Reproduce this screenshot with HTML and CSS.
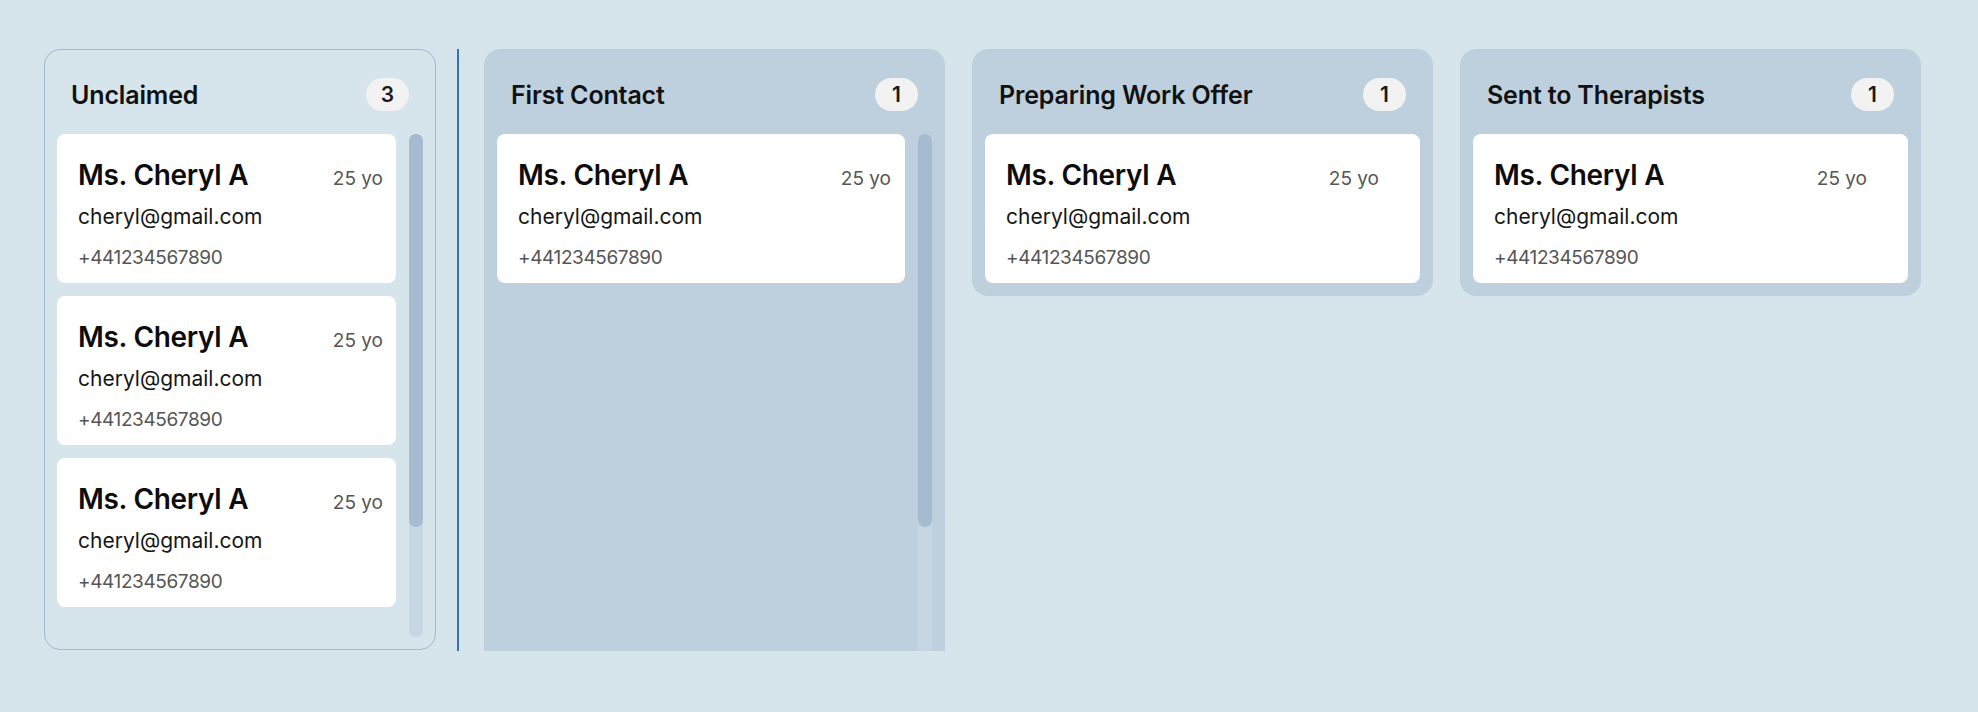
FILE: index.html
```html
<!DOCTYPE html>
<html lang="en">
<head>
<meta charset="utf-8">
<title>Board</title>
<link rel="stylesheet" href="styles.css">
</head>
<body>
<div class="board">
  <section class="column column--outlined">
    <header class="column-header">
      <h2 class="column-title">Unclaimed</h2>
      <span class="count">3</span>
    </header>
    <div class="column-body">
      <div class="card-list">
        <article class="card">
          <div class="card-top"><span class="name">Ms. Cheryl A</span><span class="age">25 yo</span></div>
          <div class="email">cheryl@gmail.com</div>
          <div class="phone">+441234567890</div>
        </article>
        <article class="card">
          <div class="card-top"><span class="name">Ms. Cheryl A</span><span class="age">25 yo</span></div>
          <div class="email">cheryl@gmail.com</div>
          <div class="phone">+441234567890</div>
        </article>
        <article class="card">
          <div class="card-top"><span class="name">Ms. Cheryl A</span><span class="age">25 yo</span></div>
          <div class="email">cheryl@gmail.com</div>
          <div class="phone">+441234567890</div>
        </article>
      </div>
      <div class="scroll-track"><div class="scroll-thumb"></div></div>
    </div>
  </section>

  <div class="divider"></div>

  <section class="column column--tall">
    <header class="column-header">
      <h2 class="column-title">First Contact</h2>
      <span class="count">1</span>
    </header>
    <div class="column-body">
      <div class="card-list">
        <article class="card">
          <div class="card-top"><span class="name">Ms. Cheryl A</span><span class="age">25 yo</span></div>
          <div class="email">cheryl@gmail.com</div>
          <div class="phone">+441234567890</div>
        </article>
      </div>
      <div class="scroll-track"><div class="scroll-thumb"></div></div>
    </div>
  </section>

  <section class="column">
    <header class="column-header">
      <h2 class="column-title">Preparing Work Offer</h2>
      <span class="count">1</span>
    </header>
    <div class="column-body">
      <div class="card-list">
        <article class="card">
          <div class="card-top"><span class="name">Ms. Cheryl A</span><span class="age">25 yo</span></div>
          <div class="email">cheryl@gmail.com</div>
          <div class="phone">+441234567890</div>
        </article>
      </div>
    </div>
  </section>

  <section class="column">
    <header class="column-header">
      <h2 class="column-title">Sent to Therapists</h2>
      <span class="count">1</span>
    </header>
    <div class="column-body">
      <div class="card-list">
        <article class="card">
          <div class="card-top"><span class="name">Ms. Cheryl A</span><span class="age">25 yo</span></div>
          <div class="email">cheryl@gmail.com</div>
          <div class="phone">+441234567890</div>
        </article>
      </div>
    </div>
  </section>
</div>
</body>
</html>
```

FILE: styles.css
```css
* { box-sizing: border-box; }

html, body {
  margin: 0;
  padding: 0;
}

body {
  background: #d6e4eb;
  font-family: Inter, Lato, "Liberation Sans", sans-serif;
  color: #111;
  width: 1978px;
  height: 712px;
  overflow: hidden;
}

.board {
  display: flex;
  align-items: flex-start;
  padding: 49px 0 0 44px;
  height: 651px;
  overflow: hidden;
}

.column {
  width: 461px;
  flex: none;
  background: #bed0dd;
  border-radius: 16px;
  padding: 13px;
  display: flex;
  flex-direction: column;
  margin-left: 27px;
}

.column--outlined {
  width: 392px;
  height: 601px;
  background: transparent;
  border: 1px solid #a3bad0;
  padding: 12px;
  margin-left: 0;
}

.column--tall {
  height: 640px;
  margin-left: 25px;
  border-radius: 16px 16px 0 0;
}

.divider {
  flex: none;
  width: 2px;
  height: 602px;
  margin-left: 21px;
  background: #3b6db5;
}

.column-header {
  display: flex;
  align-items: center;
  justify-content: space-between;
  height: 33px;
  margin: 16px 14px 23px;
}

.column-title {
  margin: 0;
  padding-top: 2px;
  font-size: 25px;
  font-weight: 600;
  line-height: 31px;
  letter-spacing: -0.15px;
  color: #111;
}

.count {
  min-width: 43px;
  height: 33px;
  padding: 0 10px;
  border-radius: 17px;
  background: #f2f2f2;
  font-size: 21px;
  font-weight: 600;
  line-height: 33px;
  text-align: center;
  color: #1a1a1a;
}

.column-body {
  flex: 1;
  display: flex;
  gap: 13px;
  min-height: 0;
}

.card-list {
  flex: 1;
  display: flex;
  flex-direction: column;
  gap: 13px;
  overflow: hidden;
}

.scroll-track {
  flex: none;
  width: 14px;
  border-radius: 7px;
  background: #c6d7e3;
}

.scroll-thumb {
  height: 393px;
  border-radius: 7px;
  background: #a6bbcf;
}

.card {
  flex: none;
  height: 149px;
  background: #fff;
  border-radius: 8px;
  padding: 23px 13px 14px 21px;
  display: flex;
  flex-direction: column;
}

.card-top {
  display: flex;
  align-items: baseline;
  justify-content: space-between;
  max-width: 373px;
  line-height: 36px;
}

.name {
  font-size: 28px;
  font-weight: 600;
  letter-spacing: -0.3px;
  color: #0d0d0d;
}

.age {
  font-size: 19px;
  color: #555;
}

.email {
  margin-top: 6px;
  font-size: 21px;
  line-height: 28px;
  color: #161616;
}

.phone {
  margin-top: 14px;
  font-size: 19px;
  line-height: 26px;
  letter-spacing: -0.4px;
  color: #555;
}
```
